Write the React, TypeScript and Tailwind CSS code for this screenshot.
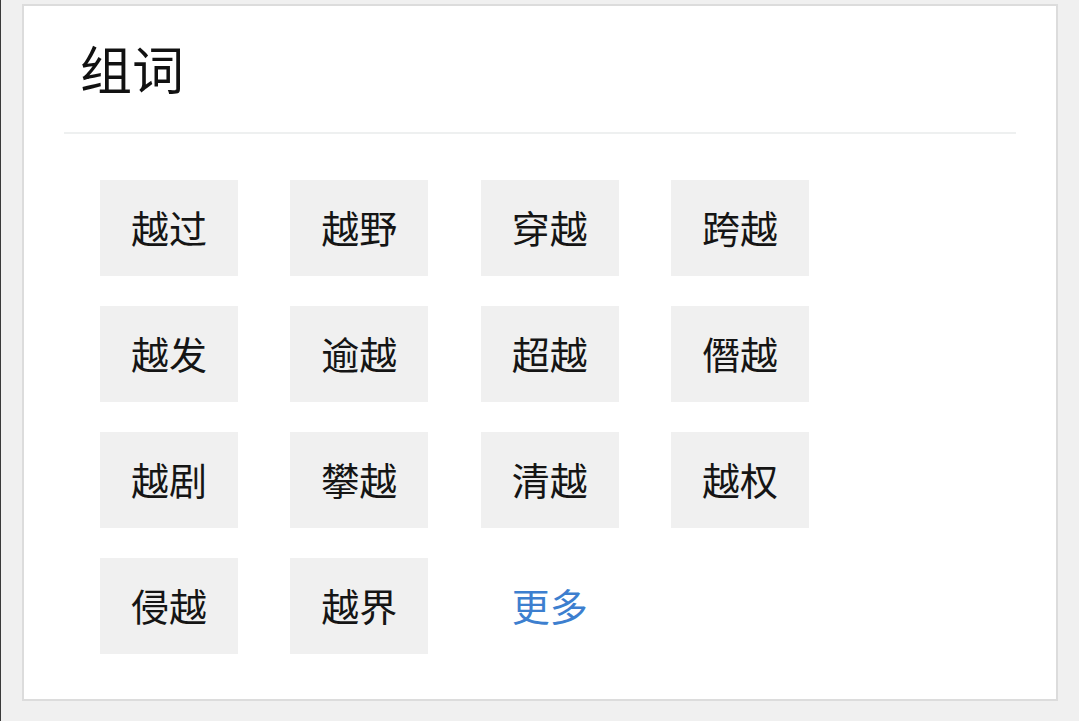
import React from "react";

const words = [
  "越过", "越野", "穿越", "跨越",
  "越发", "逾越", "超越", "僭越",
  "越剧", "攀越", "清越", "越权",
  "侵越", "越界",
];

export default function App() {
  return (
    <div
      className="w-[1079px] h-[721px] bg-[#f0f0f0] pl-[21px] pt-[4px] border-l-[1px] border-[#3a3a3a] overflow-hidden"
      style={{ fontFamily: '"Noto Sans CJK SC", "Noto Sans", sans-serif' }}
    >
      <div className="w-[1036px] h-[697px] border-2 border-[#dcdcdc] bg-white">
        <div className="h-[126px] flex items-center pl-[56px] pb-[2px]">
          <span className="text-[52px] leading-none text-[#111111]">组词</span>
        </div>
        <div className="mx-[40px] h-[2px] bg-[#eef0f0]" />
        <div className="pl-[76px] pt-[46px] grid grid-cols-[repeat(4,138px)] gap-x-[52.33px] gap-y-[30px]">
          {words.map((w) => (
            <div
              key={w}
              className="h-[96px] bg-[#f0f0f0] flex items-center justify-center pb-[2px] text-[38px] text-[#151515] leading-none"
            >
              {w}
            </div>
          ))}
          <div className="h-[96px] flex items-center justify-center pb-[2px] text-[38px] text-[#3d7fcf] leading-none">
            更多
          </div>
        </div>
      </div>
    </div>
  );
}
